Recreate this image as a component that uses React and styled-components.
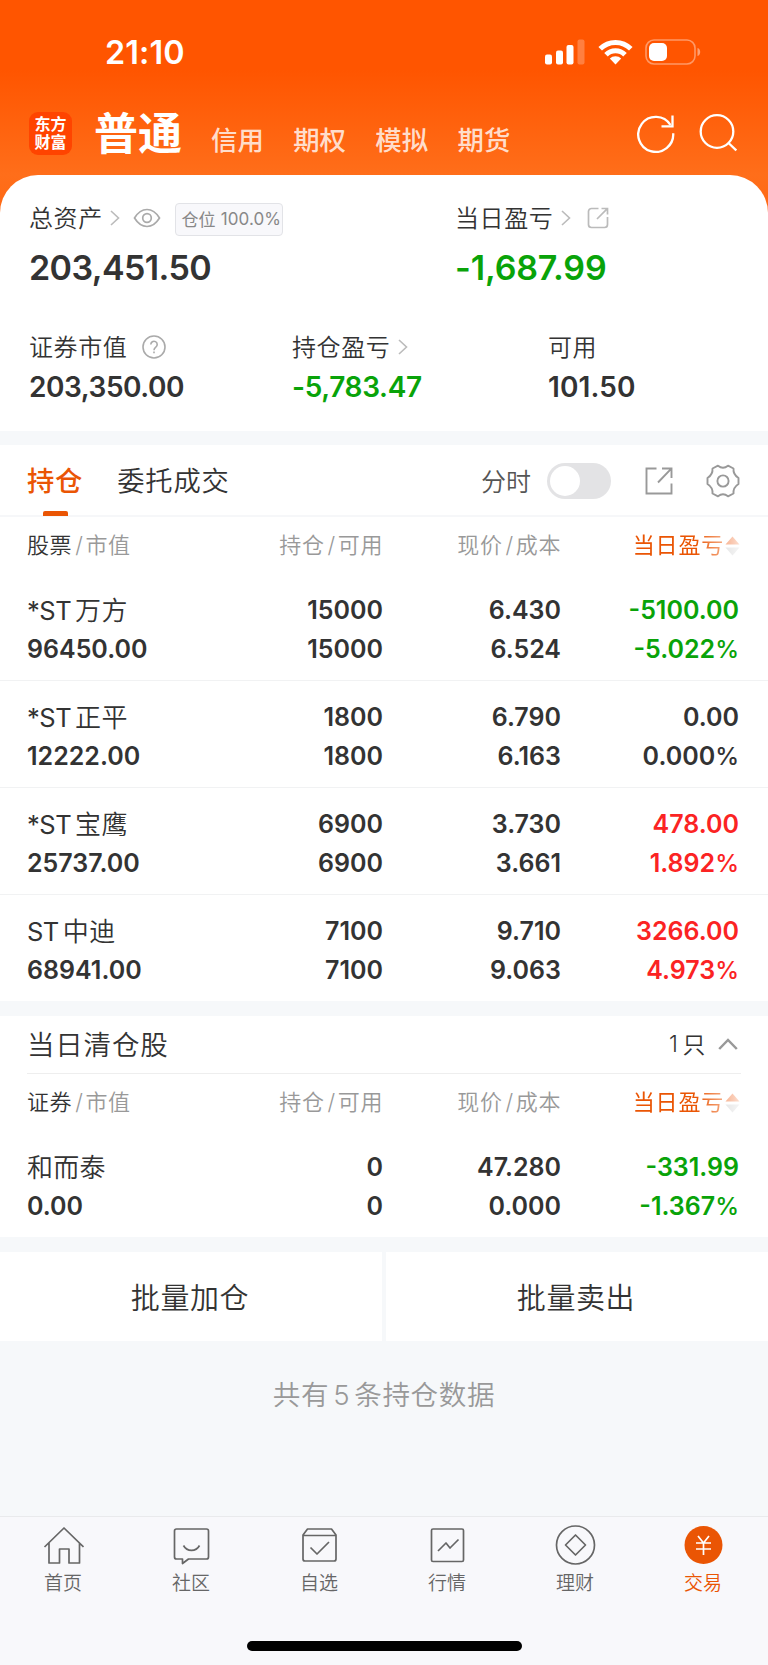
import React from "react";
import styled, { createGlobalStyle } from "styled-components";

const GlobalStyle = createGlobalStyle`
  * {
    box-sizing: border-box;
  }
  body {
    margin: 0;
    background: #f6f8fa;
    color: #333;
    font-family: Inter, "Noto Sans CJK SC", sans-serif;
    -webkit-font-smoothing: antialiased;
  }
`;

const colors = {
  brand: "#ea5504",
  up: "#fb2323",
  down: "#09a309",
  text: "#333",
  muted: "#999"
};

const Page = styled.div`
  display: flex;
  flex-direction: column;
  width: 768px;
  height: 1665px;
  overflow: hidden;
  background: #f6f8fa;
`;

const Hero = styled.div`
  flex: none;
  background: linear-gradient(#ff5500 0, #ff5500 70px, #ff6e1a 175px, #ff6914 215px);
`;

const StatusBar = styled.div`
  display: flex;
  align-items: center;
  justify-content: space-between;
  height: 104px;
  padding: 0 67px 0 105px;
`;

const Clock = styled.span`
  padding-top: 2px;
  color: #fff;
  font-size: 32.3px;
  font-weight: 600;
  line-height: 40px;
  letter-spacing: 0.1px;
`;

const StatusIcons = styled.div`
  display: flex;
  align-items: center;
  gap: 12.5px;
`;

const Header = styled.div`
  display: flex;
  align-items: center;
  height: 71px;
  padding: 0 31px 10px 29px;
`;

const Logo = styled.div`
  display: flex;
  flex-direction: column;
  justify-content: center;
  align-items: center;
  width: 43px;
  height: 43px;
  margin-bottom: 2px;
  border-radius: 9px;
  background: #ff4400;
  color: #fff;
  font-size: 16px;
  font-weight: 700;
  line-height: 17.5px;
`;

const AccountTitle = styled.span`
  margin: 0 0 2px 22px;
  color: #fff;
  font-size: 44px;
  font-weight: 700;
  line-height: 50px;
`;

const AccountTabs = styled.div`
  display: flex;
  flex: 1;
  gap: 29.4px;
  margin: 11px 0 0 29px;
`;

const AccountTab = styled.span`
  color: rgba(255, 255, 255, 0.8);
  font-size: 26.4px;
  font-weight: 500;
  line-height: 32px;
`;

const HeaderIcons = styled.div`
  display: flex;
  gap: 24px;
  margin-bottom: 3px;
`;

const Summary = styled.div`
  height: 256px;
  padding: 23px 29px 0;
  border-radius: 38px 38px 0 0;
  background: #fff;
`;

const SummaryRow = styled.div`
  display: grid;
  grid-template-columns: ${props => props.columns};
  height: ${props => props.height}px;
`;

const LabelLine = styled.div`
  display: flex;
  align-items: center;
  height: 41px;
  padding-bottom: 4px;
  font-size: 24px;
  font-weight: 350;
  letter-spacing: 0.6px;
`;

const LabelIcon = styled.span`
  display: flex;
  margin-top: 2px;
  margin-left: ${props => props.gap}px;
`;

const Badge = styled.span`
  display: flex;
  align-items: center;
  justify-content: center;
  gap: 5px;
  width: 108px;
  height: 33px;
  margin: 5px 0 0 14px;
  padding: 0 0 1px 5px;
  border: 1px solid #e2e3e7;
  border-radius: 4px;
  background: #f8f8fb;
  color: #888;
  font-size: 17px;
  font-weight: 400;
  letter-spacing: 0.1px;
`;

const Amount = styled.div`
  color: ${props => colors[props.tone || "text"]};
  font-size: ${props => (props.large ? 34 : 28)}px;
  font-weight: 600;
  line-height: ${props => (props.large ? 58 : 39)}px;
  letter-spacing: ${props => props.track || 0}px;
`;

const Divider = styled.div`
  flex: none;
  height: ${props => props.size}px;
`;

const Card = styled.section`
  flex: none;
  background: #fff;
`;

const TabBar = styled.div`
  display: flex;
  height: 72px;
  padding: 0 27px;
  border-bottom: 2px solid #f6f7f9;
`;

const Tab = styled.div`
  display: flex;
  flex-direction: column;
  justify-content: flex-end;
  align-items: center;
  height: 71px;
  margin-right: 34px;
  color: ${props => (props.active ? colors.brand : colors.text)};
  font-size: 27.3px;
  font-weight: ${props => (props.active ? 500 : 350)};
  line-height: 58px;
  letter-spacing: 0.8px;

  &::after {
    content: "";
    width: 25px;
    height: 5px;
    border-radius: 2px 2px 0 0;
    background: ${props => (props.active ? colors.brand : "transparent")};
  }
`;

const Tools = styled.div`
  display: flex;
  flex: 1;
  align-items: center;
  justify-content: flex-end;
  padding-right: 1px;
  color: #555;
  font-size: 25px;
  font-weight: 350;
`;

const Switch = styled.span`
  width: 64px;
  height: 36px;
  margin: 2px 34px 0 16px;
  padding: 3px;
  border-radius: 18px;
  background: #e3e3e5;

  &::before {
    content: "";
    display: block;
    width: 30px;
    height: 30px;
    border-radius: 50%;
    background: #fff;
  }
`;

const Columns = styled.div`
  display: grid;
  grid-template-columns: 200px 156px 178px 178px;
  padding: 0 29px 0 27px;
`;

const HeadRow = styled(Columns)`
  height: 57px;
  color: ${colors.muted};
  font-size: 22px;
  font-weight: 350;
  line-height: 57px;
  letter-spacing: 0.6px;
`;

const HeadCell = styled.span`
  text-align: ${props => (props.first ? "left" : "right")};
  white-space: nowrap;
`;

const Strong = styled.span`
  color: ${colors.text};
`;

const Slash = styled.span`
  margin: 0 2px 0 3px;
`;

const SortCell = styled.span`
  display: flex;
  align-items: center;
  justify-content: flex-end;
  gap: 1px;
  margin-right: -1px;
  color: ${colors.brand};
  font-weight: 400;
  letter-spacing: 0.8px;
  mask-image: linear-gradient(to right, #000 calc(100% - 44px), rgba(0, 0, 0, 0.2));
`;

const PositionRow = styled(Columns)`
  height: ${props => (props.last ? 106 : 107)}px;
  padding-top: 17px;
  font-size: 25px;
  font-weight: 600;
  line-height: 39px;
  border-bottom: 1px solid ${props => (props.last ? "transparent" : "#f1f2f3")};
`;

const Cell = styled.div`
  color: ${props => colors[props.tone || "text"]};
  text-align: ${props => (props.first ? "left" : "right")};
`;

const Percent = styled.span`
  font-size: 24px;
  font-weight: 450;
`;

const Name = styled.div`
  display: flex;
  gap: 4px;
  font-size: 26px;
  font-weight: 350;
  letter-spacing: 0.3px;
`;

const Prefix = styled.span`
  font-size: 25.5px;
  font-weight: 400;
  letter-spacing: -0.5px;
`;

const SectionHead = styled.div`
  display: flex;
  align-items: center;
  justify-content: space-between;
  height: 58px;
  margin: 0 27px;
  padding-bottom: 3px;
  border-bottom: 1px solid #eee;
  font-size: 27.5px;
  font-weight: 350;
  letter-spacing: 0.8px;
`;

const Count = styled.span`
  display: flex;
  align-items: center;
  gap: 4px;
  margin-right: 3px;
  font-size: 22.5px;
`;

const Actions = styled.div`
  display: grid;
  flex: none;
  grid-template-columns: 382px 382px;
  gap: 4px;
  height: 89px;
`;

const Action = styled.button`
  padding: 0 2px 2px 0;
  border: 0;
  background: #fff;
  color: ${colors.text};
  font-family: inherit;
  font-size: 29px;
  font-weight: 350;
  letter-spacing: 0.6px;
`;

const Total = styled.div`
  display: flex;
  flex: 1;
  justify-content: center;
  gap: 4px;
  color: ${colors.muted};
  font-size: 27.6px;
  font-weight: 350;
  line-height: 109px;
  letter-spacing: 0.6px;
`;

const BottomNav = styled.nav`
  display: flex;
  flex-direction: column;
  flex: none;
  align-items: center;
  height: 149px;
  border-top: 1px solid #e9eaec;
  background: #f8f8fb;
`;

const NavItems = styled.div`
  display: flex;
  width: 100%;
  height: 124px;
`;

const NavItem = styled.div`
  display: flex;
  flex: 1;
  flex-direction: column;
  align-items: center;
  padding: 8px 2px 0 0;
  color: ${props => (props.active ? colors.brand : "#666")};
  font-size: 19px;
  font-weight: 350;
  line-height: 33px;
`;

const HomeIndicator = styled.div`
  width: 275px;
  height: 10px;
  border-radius: 5px;
  background: #000;
`;

const Chevron = () => (
  <svg width="10" height="16" viewBox="0 0 10 16" fill="none" stroke="#bbb" strokeWidth="1.6">
    <path d="M1 1l7.5 7L1 15" />
  </svg>
);

const SignalIcon = () => (
  <svg width="40" height="26" viewBox="0 0 40 26" fill="#fff">
    <rect x="0" y="15.500" width="7" height="10" rx="2" />
    <rect x="11" y="11.500" width="7" height="14" rx="2" />
    <rect x="21.500" y="6" width="7" height="19.500" rx="2" />
    <rect x="32.500" y="0.500" width="7" height="25" rx="2" opacity="0.25" />
  </svg>
);

const WifiIcon = () => (
  <svg width="35" height="26" viewBox="0 0 35 26" fill="none" stroke="#fff" strokeWidth="5">
    <path d="M2.200 9.800a21.500 21.500 0 0 1 30.600 0" />
    <path d="M8 15.800a13.400 13.400 0 0 1 19 0" />
    <path d="M11.800 19.600a8 8 0 0 1 11.400 0L17.500 25.500z" fill="#fff" stroke="none" />
  </svg>
);

const BatteryIcon = () => (
  <svg width="56" height="26" viewBox="0 0 56 26">
    <rect x="1" y="1" width="49" height="24" rx="8" fill="none" stroke="#fff" strokeOpacity="0.4" strokeWidth="1.600" />
    <rect x="4" y="4" width="18" height="18" rx="5" fill="#fff" />
    <path d="M52.500 9v8c3.600-1 3.600-7 0-8z" fill="#fff" fillOpacity="0.45" />
  </svg>
);

const RefreshIcon = () => (
  <svg width="38" height="40" viewBox="0 0 38 40" fill="none" stroke="#fff" strokeWidth="2.300">
    <path d="M36.200 20.300A17.500 17.500 0 1 1 33.500 12" />
    <path d="M24.500 13.300H35.500V2.500" />
  </svg>
);

const SearchIcon = () => (
  <svg width="38" height="40" viewBox="0 0 38 40" fill="none" stroke="#fff" strokeWidth="2.300">
    <circle cx="18" cy="18.500" r="16.300" />
    <path d="M29 29.500l8.300 8" />
  </svg>
);

const EyeIcon = () => (
  <svg width="28" height="20" viewBox="0 0 28 20" fill="none" stroke="#aaa" strokeWidth="1.700">
    <path d="M1.500 10C5 4.300 9.300 1.500 14 1.500S23 4.300 26.500 10C23 15.700 18.700 18.500 14 18.500S5 15.700 1.500 10z" />
    <circle cx="14" cy="10" r="4.300" />
  </svg>
);

const ShareIcon = () => (
  <svg width="22" height="22" viewBox="0 0 22 22" fill="none" stroke="#bbb" strokeWidth="1.700">
    <path d="M11.500 1.500H4.500a3 3 0 0 0-3 3v13a3 3 0 0 0 3 3h13a3 3 0 0 0 3-3V10" />
    <path d="M14.500 1.500h6v6M20.300 1.700L10 12" />
  </svg>
);

const HelpIcon = () => (
  <svg width="24" height="24" viewBox="0 0 24 24" fill="none" stroke="#aaa" strokeWidth="1.600">
    <circle cx="12" cy="12" r="11" />
    <path d="M8.800 9.500a3.200 3.200 0 1 1 5 2.600c-1.200.9-1.800 1.500-1.800 3.100M12 16.500v1.700" />
  </svg>
);

const ExportIcon = () => (
  <svg width="28" height="28" viewBox="0 0 28 28" fill="none" stroke="#999" strokeWidth="1.900">
    <path d="M11.500 1.500H1.500v25h25V16.500M17 1.500h9.500V11M26.300 1.700L13 15.500" />
  </svg>
);

const GearIcon = () => (
  <svg width="34" height="34" viewBox="0 0 34 34" fill="none" stroke="#999" strokeWidth="1.900" strokeLinejoin="round">
    <path d="M12 1.700Q17 5.600 22 1.700L27.500 4.500Q27 10.500 32.500 14V20Q27 23.500 27.500 29.500L22 32.300Q17 28.400 12 32.300L6.500 29.500Q7 23.500 1.500 20V14Q7 10.500 6.500 4.500Z" />
    <circle cx="17" cy="17" r="5.600" />
  </svg>
);

const SortIcon = () => (
  <svg width="15" height="20" viewBox="0 0 15 20">
    <path d="M7.500 0.500L14.500 8.500H0.500z" fill="#f0601a" />
    <path d="M7.500 19.500L14.500 11.500H0.500z" fill="#ccc" />
  </svg>
);

const CollapseIcon = () => (
  <svg width="20" height="12" viewBox="0 0 20 12" fill="none" stroke="#999" strokeWidth="2.500">
    <path d="M1.200 11L10 2l8.800 9" />
  </svg>
);

const NavIcon = ({ children }) => (
  <svg width="42" height="42" viewBox="0 0 42 42" fill="none" stroke="#666" strokeWidth="1.700" strokeLinejoin="round">
    {children}
  </svg>
);

const navItems = [
  {
    label: "首页",
    icon: <path d="M2.500 22L22 3l19.500 19M7 18v20h10.500V24h9.500v14h10.500V18" />
  },
  {
    label: "社区",
    icon: (
      <g>
        <path d="M6.500 4h30a2 2 0 0 1 2 2v26a2 2 0 0 1-2 2H18.500l-6 4.500V34h-6a2 2 0 0 1-2-2V6a2 2 0 0 1 2-2z" />
        <path d="M13.500 20.500c3.500 6.500 12.500 6.500 16 0" />
      </g>
    )
  },
  {
    label: "自选",
    icon: (
      <g>
        <path d="M5 10l4.500-6h24l4.500 6v24a2 2 0 0 1-2 2H7a2 2 0 0 1-2-2zM5 10.500h33" />
        <path d="M12.500 22.500l6.500 6.500L31 17" />
      </g>
    )
  },
  {
    label: "行情",
    icon: (
      <g>
        <rect x="5.500" y="4" width="32" height="32.500" rx="1.500" />
        <path d="M12 26l8-8 4 5 8.500-8.500" />
      </g>
    )
  },
  {
    label: "理财",
    icon: (
      <g>
        <circle cx="21.500" cy="20" r="19" />
        <path d="M21.500 10l10 10-10 10-10-10z" />
      </g>
    )
  },
  {
    label: "交易",
    active: true,
    icon: (
      <g>
        <circle cx="21.500" cy="20" r="19" fill="#ea5504" stroke="none" />
        <path d="M16 11l5.500 7 5.500-7M14 18h15M14 24h15M21.500 18v12" stroke="#fff" />
      </g>
    )
  }
];

const positions = [
  { prefix: "*ST", name: "万方", value: "96450.00", held: "15000", price: "6.430", cost: "6.524", profit: "-5100.00", rate: "-5.022", tone: "down" },
  { prefix: "*ST", name: "正平", value: "12222.00", held: "1800", price: "6.790", cost: "6.163", profit: "0.00", rate: "0.000", tone: "text" },
  { prefix: "*ST", name: "宝鹰", value: "25737.00", held: "6900", price: "3.730", cost: "3.661", profit: "478.00", rate: "1.892", tone: "up" },
  { prefix: "ST", name: "中迪", value: "68941.00", held: "7100", price: "9.710", cost: "9.063", profit: "3266.00", rate: "4.973", tone: "up" }
];

const cleared = [
  { name: "和而泰", value: "0.00", held: "0", price: "47.280", cost: "0.000", profit: "-331.99", rate: "-1.367", tone: "down" }
];

const TableHead = ({ title }) => (
  <HeadRow>
    <HeadCell first>
      <Strong>{title}</Strong>
      <Slash>/</Slash>市值
    </HeadCell>
    <HeadCell>
      持仓<Slash>/</Slash>可用
    </HeadCell>
    <HeadCell>
      现价<Slash>/</Slash>成本
    </HeadCell>
    <SortCell>
      当日盈亏
      <SortIcon />
    </SortCell>
  </HeadRow>
);

const Position = ({ item, last }) => (
  <PositionRow last={last}>
    <Cell first>
      <Name>
        {item.prefix && <Prefix>{item.prefix}</Prefix>}
        <span>{item.name}</span>
      </Name>
      {item.value}
    </Cell>
    <Cell>
      <div>{item.held}</div>
      {item.held}
    </Cell>
    <Cell>
      <div>{item.price}</div>
      {item.cost}
    </Cell>
    <Cell tone={item.tone}>
      <div>{item.profit}</div>
      {item.rate}
      <Percent>%</Percent>
    </Cell>
  </PositionRow>
);

const App = () => (
  <Page>
    <GlobalStyle />
    <Hero>
      <StatusBar>
        <Clock>21:10</Clock>
        <StatusIcons>
          <SignalIcon />
          <WifiIcon />
          <BatteryIcon />
        </StatusIcons>
      </StatusBar>
      <Header>
        <Logo>
          <span>东方</span>
          <span>财富</span>
        </Logo>
        <AccountTitle>普通</AccountTitle>
        <AccountTabs>
          {["信用", "期权", "模拟", "期货"].map(name => (
            <AccountTab key={name}>{name}</AccountTab>
          ))}
        </AccountTabs>
        <HeaderIcons>
          <RefreshIcon />
          <SearchIcon />
        </HeaderIcons>
      </Header>
      <Summary>
        <SummaryRow columns="426px 1fr" height={129}>
          <div>
            <LabelLine>
              总资产
              <LabelIcon gap={7}><Chevron /></LabelIcon>
              <LabelIcon gap={13}><EyeIcon /></LabelIcon>
              <Badge>
                <span>仓位</span>
                <span>100.0%</span>
              </Badge>
            </LabelLine>
            <Amount large track={-0.6}>203,451.50</Amount>
          </div>
          <div>
            <LabelLine>
              当日盈亏
              <LabelIcon gap={8}><Chevron /></LabelIcon>
              <LabelIcon gap={16}><ShareIcon /></LabelIcon>
            </LabelLine>
            <Amount large tone="down" track={-0.15}>-1,687.99</Amount>
          </div>
        </SummaryRow>
        <SummaryRow columns="263px 256px 1fr" height={104}>
          <div>
            <LabelLine>
              证券市值
              <LabelIcon gap={15}><HelpIcon /></LabelIcon>
            </LabelLine>
            <Amount track={-0.45}>203,350.00</Amount>
          </div>
          <div>
            <LabelLine>
              持仓盈亏
              <LabelIcon gap={8}><Chevron /></LabelIcon>
            </LabelLine>
            <Amount tone="down" track={-0.35}>-5,783.47</Amount>
          </div>
          <div>
            <LabelLine>可用</LabelLine>
            <Amount track={0.1}>101.50</Amount>
          </div>
        </SummaryRow>
      </Summary>
    </Hero>
    <Divider size={14} />
    <Card>
      <TabBar>
        <Tab active>持仓</Tab>
        <Tab>委托成交</Tab>
        <Tools>
          分时
          <Switch />
          <LabelIcon gap={0}><ExportIcon /></LabelIcon>
          <LabelIcon gap={33}><GearIcon /></LabelIcon>
        </Tools>
      </TabBar>
      <TableHead title="股票" />
      {positions.map((item, i) => (
        <Position key={item.name} item={item} last={i === positions.length - 1} />
      ))}
    </Card>
    <Divider size={15} />
    <Card>
      <SectionHead>
        当日清仓股
        <Count>
          <span>1</span>
          <span>只</span>
          <LabelIcon gap={8}><CollapseIcon /></LabelIcon>
        </Count>
      </SectionHead>
      <TableHead title="证券" />
      {cleared.map(item => (
        <Position key={item.name} item={item} last />
      ))}
    </Card>
    <Divider size={15} />
    <Actions>
      <Action>批量加仓</Action>
      <Action>批量卖出</Action>
    </Actions>
    <Total>
      <span>共有</span>
      <span>5</span>
      <span>条持仓数据</span>
    </Total>
    <BottomNav>
      <NavItems>
        {navItems.map(item => (
          <NavItem key={item.label} active={item.active}>
            <NavIcon>{item.icon}</NavIcon>
            {item.label}
          </NavItem>
        ))}
      </NavItems>
      <HomeIndicator />
    </BottomNav>
  </Page>
);

export default App;
